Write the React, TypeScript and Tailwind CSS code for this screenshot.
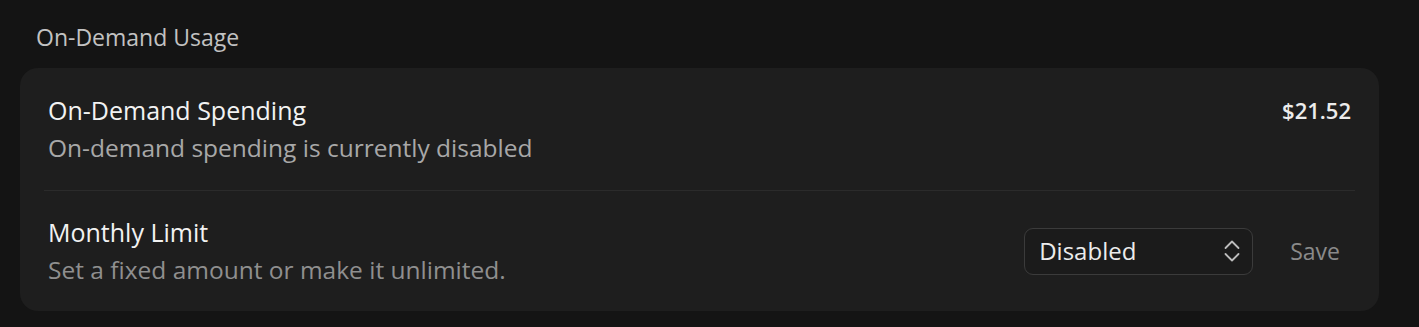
export default function App() {
  return (
    <div
      className="min-h-screen w-full bg-[#141414] pl-5 pr-10 pt-[22px] pb-4"
      style={{ fontFamily: '"Open Sans", "Noto Sans", sans-serif' }}
    >
      <h2 className="pl-4 text-[23px] leading-[30px] text-[#c2c2c2]">On-Demand Usage</h2>

      <div className="mt-[16px] rounded-[18px] bg-[#1e1e1e] px-6">
        <div className="flex items-start justify-between px-1 pt-[27px] pb-[27px]">
          <div>
            <div className="text-[25px] leading-[30px] text-[#f2f2f2]">On-Demand Spending</div>
            <div className="mt-2 text-[24.5px] leading-[30px] text-[#a8a8a8]">
              On-demand spending is currently disabled
            </div>
          </div>
          <div className="text-[22px] font-semibold leading-[30px] text-[#ececec]">$21.52</div>
        </div>

        <div className="h-px bg-[#2b2b2b]" />

        <div className="flex items-center justify-between px-1 pt-[26px] pb-[26px]">
          <div>
            <div className="text-[25px] leading-[30px] text-[#f2f2f2]">Monthly Limit</div>
            <div className="mt-2 text-[24.5px] leading-[30px] text-[#8f8f8f]">
              Set a fixed amount or make it unlimited.
            </div>
          </div>
          <div className="flex items-center gap-[37px] pr-[11px]">
            <button className="flex h-[47px] w-[229px] items-center justify-between rounded-[9px] border border-[#3b3b3b] bg-[#1b1b1b] pl-[14px] pr-[12px] text-[24px] text-[#ececec]">
              <span>Disabled</span>
              <svg width="16" height="24" viewBox="0 0 16 24" fill="none" stroke="#bdbdbd" strokeWidth="1.8" strokeLinecap="round" strokeLinejoin="round">
                <path d="M1.5 9 L8 2.5 L14.5 9" />
                <path d="M1.5 15 L8 21.5 L14.5 15" />
              </svg>
            </button>
            <span className="text-[23px] text-[#8a8a8a]">Save</span>
          </div>
        </div>
      </div>
    </div>
  );
}
